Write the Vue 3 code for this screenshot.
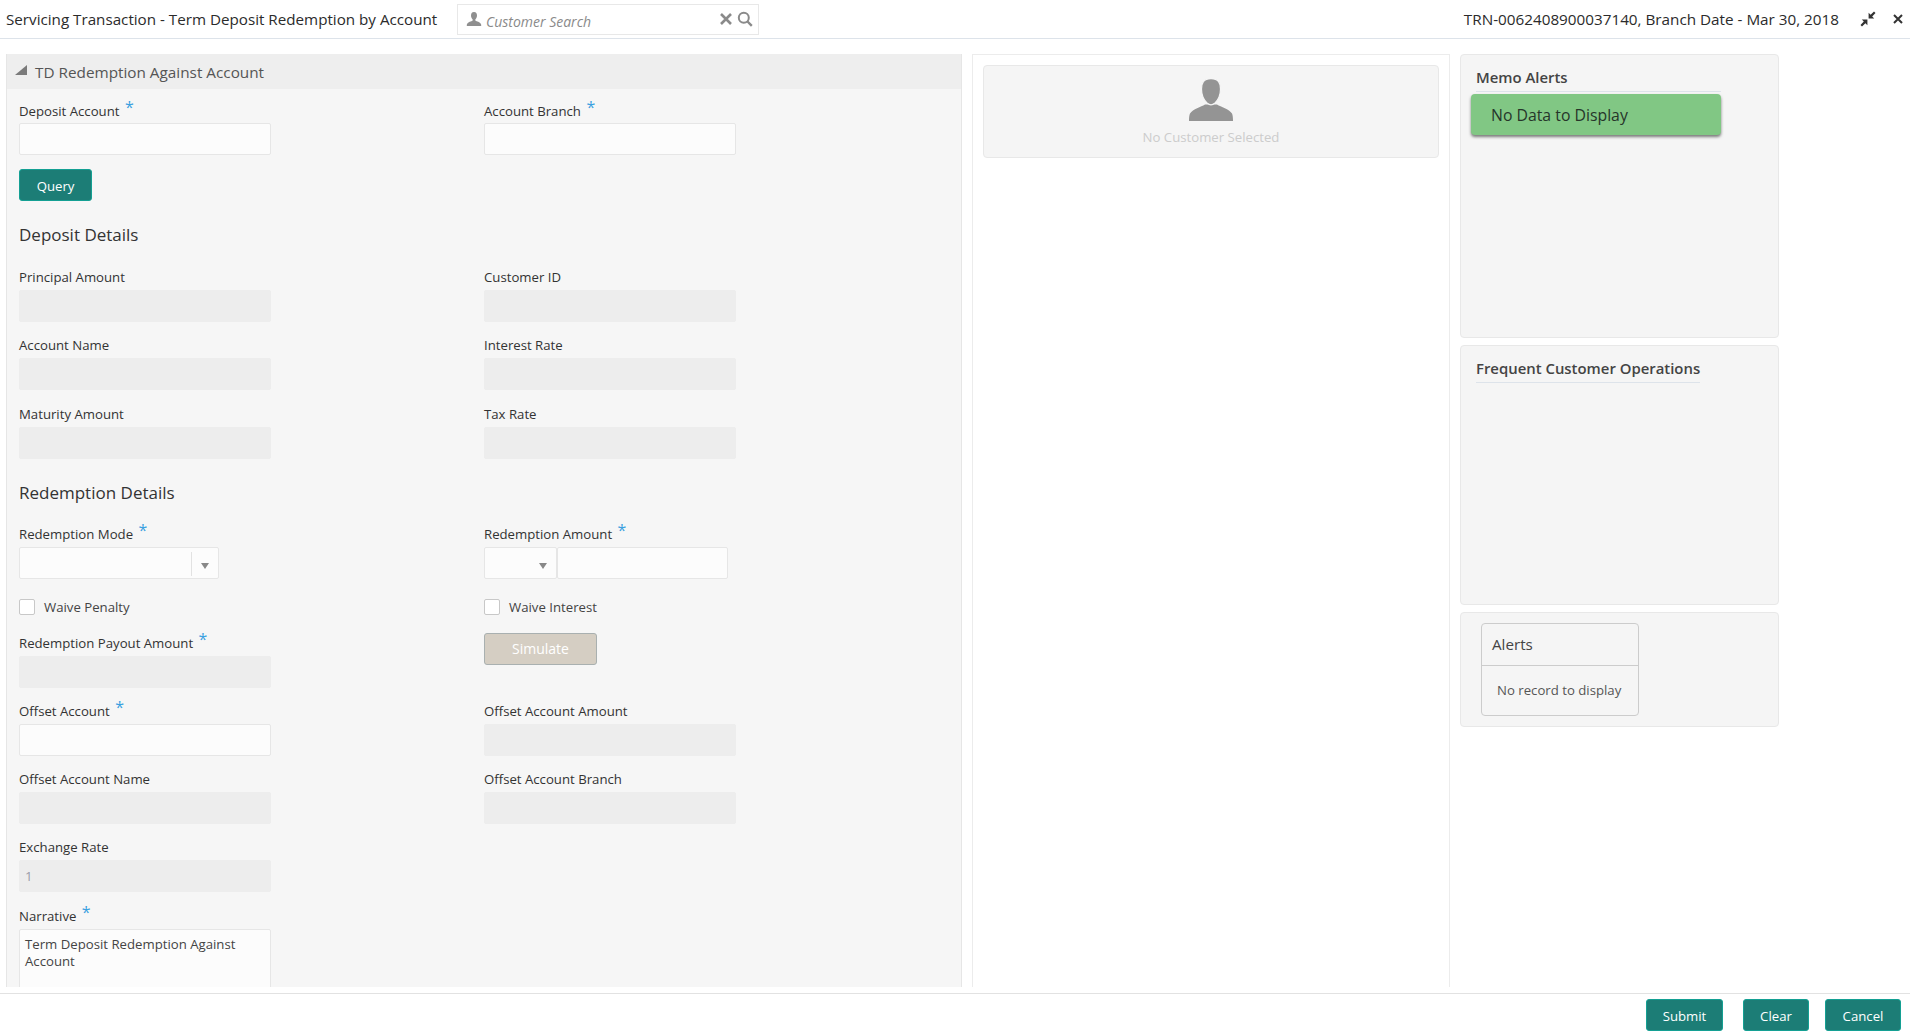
<script setup>
const depositFields = [
  { label: 'Principal Amount' },
  { label: 'Customer ID' },
  { label: 'Account Name' },
  { label: 'Interest Rate' },
  { label: 'Maturity Amount' },
  { label: 'Tax Rate' }
]
</script>

<template>
  <div class="page">
    <header class="topbar">
      <div class="topbar-left">
        <span class="page-title">Servicing Transaction - Term Deposit Redemption by Account</span>
        <div class="search">
          <svg class="search-user" viewBox="0 0 16 16" width="16" height="16">
            <path fill="#8f8f8f" d="M8 1C5.800 1 5 2.600 5 4.500c0 1.700.8 3.200 1.700 4.100v1C5.300 10.500 2 11 1 13c-.2.500-.2 1.300-.2 2h14.400c0-.7 0-1.500-.2-2-1-2-4.300-2.500-5.700-3.400v-1C10.200 7.700 11 6.200 11 4.500 11 2.600 10.200 1 8 1z" />
          </svg>
          <span class="search-text">Customer Search</span>
          <svg class="search-x" viewBox="0 0 14 14" width="14" height="14">
            <path d="M2 2l10 10M12 2L2 12" stroke="#8a8a8a" stroke-width="2.600" fill="none" />
          </svg>
          <svg class="search-glass" viewBox="0 0 16 16" width="16" height="16">
            <circle cx="6.800" cy="6.800" r="5" stroke="#8a8a8a" stroke-width="2" fill="none" />
            <path d="M10.500 10.500l4.300 4.300" stroke="#8a8a8a" stroke-width="2.400" fill="none" />
          </svg>
        </div>
      </div>
      <div class="topbar-right">
        <span class="trn">TRN-0062408900037140, Branch Date - Mar 30, 2018</span>
        <svg class="collapse" viewBox="0 0 16 16" width="16" height="16">
          <path fill="#333" d="M8.600 7.400V1.800l2 2L14 .5 15.500 2l-3.300 3.400 2 2zM7.400 8.600v5.600l-2-2L2 15.500.5 14l3.300-3.400-2-2z" />
        </svg>
        <svg class="close" viewBox="0 0 10 10" width="10" height="10">
          <path d="M1 1l8 8M9 1L1 9" stroke="#333" stroke-width="2" fill="none" />
        </svg>
      </div>
    </header>

    <main class="content">
      <section class="panel-left">
        <div class="panel-head">
          <span class="corner"></span>
          <span>TD Redemption Against Account</span>
        </div>
        <div class="form">
          <div class="grid top-row">
            <div class="field">
              <label>Deposit Account <em>*</em></label>
              <input class="inp" type="text" />
            </div>
            <div class="field">
              <label>Account Branch <em>*</em></label>
              <input class="inp" type="text" />
            </div>
          </div>
          <button class="btn query">Query</button>

          <h3 class="heading first">Deposit Details</h3>
          <div class="grid rows">
            <div v-for="f in depositFields" :key="f.label" class="field">
              <label>{{ f.label }}</label>
              <input class="inp off" type="text" readonly />
            </div>
          </div>

          <h3 class="heading second">Redemption Details</h3>
          <div class="grid mode-row">
            <div class="field">
              <label>Redemption Mode <em>*</em></label>
              <div class="select mode">
                <span class="sep"></span>
                <span class="arrow"></span>
              </div>
            </div>
            <div class="field">
              <label>Redemption Amount <em>*</em></label>
              <div class="amount">
                <div class="select ccy"><span class="arrow"></span></div>
                <input class="inp amt" type="text" />
              </div>
            </div>
          </div>

          <div class="grid check-row">
            <div class="check"><span class="box"></span><span>Waive Penalty</span></div>
            <div class="check"><span class="box"></span><span>Waive Interest</span></div>
          </div>

          <div class="grid payout-row">
            <div class="field">
              <label>Redemption Payout Amount <em>*</em></label>
              <input class="inp off" type="text" readonly />
            </div>
            <div><button class="btn-sim">Simulate</button></div>
          </div>

          <div class="grid offset-row">
            <div class="field">
              <label>Offset Account <em>*</em></label>
              <input class="inp" type="text" />
            </div>
            <div class="field">
              <label>Offset Account Amount</label>
              <input class="inp off" type="text" readonly />
            </div>
            <div class="field">
              <label>Offset Account Name</label>
              <input class="inp off" type="text" readonly />
            </div>
            <div class="field">
              <label>Offset Account Branch</label>
              <input class="inp off" type="text" readonly />
            </div>
            <div class="field">
              <label>Exchange Rate</label>
              <input class="inp off rate" type="text" value="1" readonly />
            </div>
            <div></div>
            <div class="field">
              <label>Narrative <em>*</em></label>
              <textarea class="inp narrative" rows="4">Term Deposit Redemption Against Account</textarea>
            </div>
          </div>
        </div>
      </section>

      <section class="panel-mid">
        <div class="customer">
          <svg viewBox="0 0 44 42" width="44" height="42">
            <path fill="#949494" d="M0 42c0-3 .2-6 1-7.500C4 30 12 28 16 25.500h12c4 2.500 12 4.500 15 9 .8 1.500 1 4.500 1 7.500z" />
            <path fill="#949494" stroke="#f5f5f5" stroke-width="1.200" d="M22 -.4C14.500-.4 12.500 4 12.500 10c0 6.500 3 11.500 5.500 14 1.500 1.200 2.800 1.800 4 1.800s2.500-.6 4-1.800c2.500-2.500 5.500-7.500 5.500-14C31.500 4 29.500-.4 22-.4z" />
          </svg>
          <span>No Customer Selected</span>
        </div>
      </section>

      <aside class="panel-right">
        <div class="card memo">
          <div class="card-title memo-title">Memo Alerts</div>
          <div class="no-data">No Data to Display</div>
        </div>
        <div class="card frequent">
          <div class="card-title freq-title">Frequent Customer Operations</div>
        </div>
        <div class="card alerts-card">
          <div class="alerts">
            <div class="alerts-head">Alerts</div>
            <div class="alerts-body">No record to display</div>
          </div>
        </div>
      </aside>
    </main>

    <footer class="footer">
      <button class="btn submit">Submit</button>
      <button class="btn clear">Clear</button>
      <button class="btn cancel">Cancel</button>
    </footer>
  </div>
</template>

<style>
html, body { margin: 0; background: #fff; overflow: hidden; }
</style>

<style scoped>
.page {
  width: 1910px;
  height: 1031px;
  display: flex;
  flex-direction: column;
  font-family: "Open Sans", "Noto Sans", sans-serif;
  font-size: 13.200px;
  color: #333;
  background: #fff;
  overflow: hidden;
}
.topbar {
  height: 38px;
  flex: none;
  border-bottom: 1px solid #dde3ea;
  display: flex;
  align-items: center;
  justify-content: space-between;
}
.topbar-left { display: flex; align-items: center; padding-left: 6px; }
.page-title { font-size: 15.200px; color: #2b2b2b; width: 451px; white-space: nowrap; margin-top: -1px; }
.search {
  width: 302px;
  height: 31px;
  box-sizing: border-box;
  border: 1px solid #e8e8e8;
  display: flex;
  align-items: center;
  padding-left: 8px;
}
.search-text {
  font-style: italic;
  font-size: 14px;
  color: #8a8a8a;
  margin-left: 4px;
  margin-top: 4px;
  width: 233px;
  white-space: nowrap;
}
.search-x { margin-right: 4px; }
.topbar-right { display: flex; align-items: center; padding-right: 7px; }
.trn { font-size: 15.250px; color: #2b2b2b; margin-top: -1px; }
.collapse { margin-left: 21px; }
.close { margin-left: 17px; }

.content {
  flex: 1;
  min-height: 0;
  display: flex;
  box-sizing: border-box;
  padding: 15px 0 6px 6px;
}
.panel-left {
  width: 956px;
  flex: none;
  box-sizing: border-box;
  background: #f6f6f6;
  border-left: 1px solid #e6e6e6;
  border-right: 1px solid #e6e6e6;
  overflow: hidden;
}
.panel-head {
  height: 35px;
  background: #eeeeee;
  display: flex;
  align-items: center;
  font-size: 15.300px;
  color: #555;
  padding: 1px 0 0 8px;
  box-sizing: border-box;
}
.corner {
  width: 0;
  height: 0;
  border-style: solid;
  border-width: 0 0 10px 12px;
  border-color: transparent transparent #7a7a7a transparent;
  margin-right: 8px;
  margin-top: -4px;
}
.form { padding: 8px 12px; }
.grid {
  display: grid;
  grid-template-columns: 465px 465px;
}
.field { display: flex; flex-direction: column; }
.field label {
  height: 26px;
  line-height: 26px;
  color: #333;
  white-space: nowrap;
}
.top-row .field label { line-height: 28px; }
.field label em {
  font-style: normal;
  color: #3aa0e0;
  font-size: 16px;
  line-height: 1;
  position: relative;
  top: -3px;
  margin-left: 2px;
}
.inp {
  width: 252px;
  height: 32px;
  box-sizing: border-box;
  border: 1px solid #e6e6e6;
  border-radius: 2px;
  background: #fcfcfc;
  padding: 0 5px;
  margin: 0;
  font: inherit;
  color: #444;
  outline: none;
  display: block;
}
.off { background: #ededed; border-color: #ededed; }
.rate { color: #9a9aa8; }
.narrative {
  height: 100px;
  padding: 6px 5px;
  line-height: 17px;
  resize: none;
  overflow: hidden;
}
.btn {
  height: 32px;
  box-sizing: border-box;
  background: #1c7d76;
  border: 1px solid #14a093;
  border-radius: 3px;
  color: #fff;
  font: inherit;
  padding: 1px 0 0;
  display: block;
}
.query { width: 73px; margin-top: 14px; }
.heading { font-size: 17px; font-weight: 400; line-height: 24px; margin: 0; color: #333; }
.heading.first { margin-top: 22px; margin-bottom: 17px; }
.heading.second { margin-top: 22px; margin-bottom: 16px; }
.rows { row-gap: 10.300px; }
.offset-row { row-gap: 10.400px; }

.select {
  position: relative;
  height: 32px;
  box-sizing: border-box;
  border: 1px solid #e6e6e6;
  border-radius: 2px;
  background: #fcfcfc;
}
.mode { width: 200px; }
.ccy { width: 73px; flex: none; }
.sep {
  position: absolute;
  left: 171px;
  top: 4px;
  height: 24px;
  width: 1px;
  background: #e2e2e2;
}
.arrow {
  position: absolute;
  right: 9px;
  top: 15px;
  width: 0;
  height: 0;
  border-style: solid;
  border-width: 6px 4.500px 0;
  border-color: #888 transparent transparent;
}
.amount { display: flex; }
.amt { width: 171px; }

.check-row { margin-top: 20px; }
.check { display: flex; align-items: center; height: 16px; color: #444; }
.box {
  width: 16px;
  height: 16px;
  box-sizing: border-box;
  border: 1px solid #c8c8c8;
  border-radius: 2px;
  background: #fff;
  margin-right: 9px;
}
.payout-row { margin-top: 15px; }
.btn-sim {
  width: 113px;
  height: 32px;
  margin-top: 3px;
  box-sizing: border-box;
  background: #d5cec3;
  border: 1px solid #a9b0b0;
  border-radius: 3px;
  color: #fff;
  font: inherit;
  font-size: 14px;
  padding: 0;
  display: block;
}
.offset-row { margin-top: 10px; }

.panel-mid {
  width: 478px;
  flex: none;
  margin-left: 10px;
  box-sizing: border-box;
  border: 1px solid #ececec;
  border-bottom: none;
  padding: 10px;
}
.customer {
  height: 93px;
  box-sizing: border-box;
  background: #f5f5f5;
  border: 1px solid #e8e8e8;
  border-radius: 4px;
  display: flex;
  flex-direction: column;
  align-items: center;
  padding-top: 13px;
  color: #cccccc;
}
.customer span { margin-top: 7px; line-height: 18px; }

.panel-right {
  width: 319px;
  flex: none;
  margin-left: 10px;
  display: flex;
  flex-direction: column;
  gap: 7px;
}
.card {
  box-sizing: border-box;
  background: #f5f5f5;
  border: 1px solid #e8e8e8;
  border-radius: 4px;
}
.memo { height: 284px; }
.frequent { height: 260px; }
.alerts-card { height: 115px; padding: 10px 0 0 20px; }
.card-title {
  font-size: 14.900px;
  font-weight: 600;
  line-height: 20px;
  color: #444;
  box-sizing: border-box;
  margin-left: 15px;
  padding: 12px 0 4px 0;
  border-bottom: 1px solid #dde3ea;
  white-space: nowrap;
}
.memo-title { width: 245px; }
.freq-title { width: 224px; }
.no-data {
  width: 250px;
  height: 41px;
  margin: 2px 0 0 10px;
  box-sizing: border-box;
  background: #81c784;
  border-radius: 4px;
  box-shadow: 0 2px 3px rgba(0, 0, 0, 0.5);
  color: #26352a;
  font-size: 15.800px;
  line-height: 43px;
  padding-left: 20px;
}
.alerts {
  width: 158px;
  height: 93px;
  box-sizing: border-box;
  border: 1px solid #cccccc;
  border-radius: 4px;
}
.alerts-head {
  height: 42px;
  box-sizing: border-box;
  border-bottom: 1px solid #cccccc;
  font-size: 15.200px;
  line-height: 41px;
  padding-left: 10px;
  color: #444;
}
.alerts-body { padding: 15px 0 0 15px; line-height: 18px; color: #555; white-space: nowrap; }

.footer {
  height: 38px;
  flex: none;
  box-sizing: border-box;
  border-top: 1px solid #e2e2e2;
  padding: 5px 9px 0 0;
  display: flex;
  justify-content: flex-end;
}
.submit { width: 77px; }
.clear { width: 66px; margin-left: 20px; }
.cancel { width: 76px; margin-left: 16px; }
</style>
